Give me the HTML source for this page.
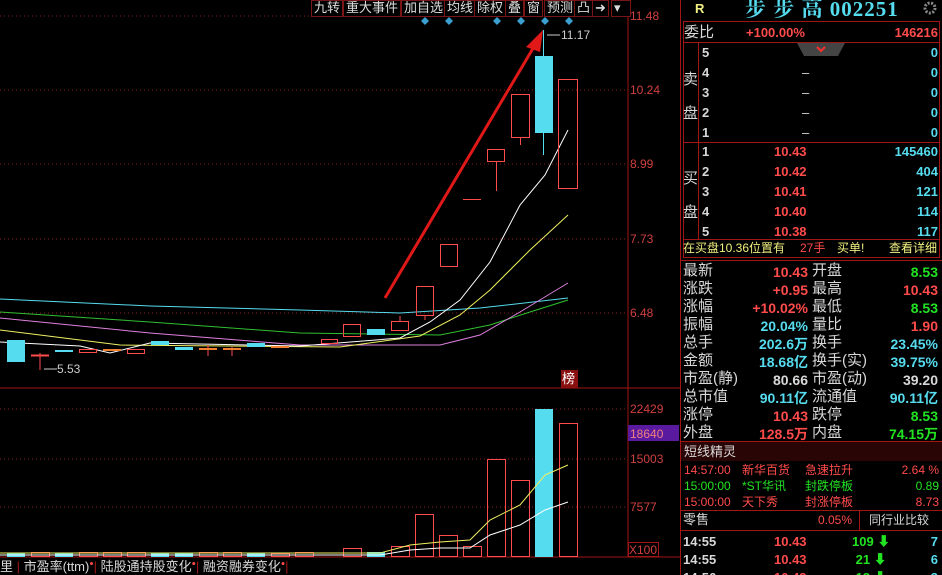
<!DOCTYPE html>
<html style="margin:0;height:575px;overflow:hidden"><head><meta charset="utf-8"><style>
body{margin:0;background:#000;width:942px;height:575px;overflow:hidden;position:relative;font-family:"Liberation Sans","Noto Sans CJK SC",sans-serif;}
.a{position:absolute;white-space:nowrap;line-height:1;}
.r{color:#ff4b4b}.c{color:#56dcef}.g{color:#22e322}.w{color:#d8d8d8}.y{color:#f0f080}
.rt{text-align:right}
.ax{color:#d04040;font-size:12px;}
.tb{position:absolute;top:0;height:15px;border:1px solid #7a1515;color:#ddd;font-size:13px;line-height:14px;padding:0 2px;background:#000}
</style></head><body>
<svg class="a" style="left:0;top:0" width="942" height="575">
<g stroke="#8a1a1a" stroke-dasharray="1,3">
<line x1="0" y1="16" x2="628" y2="16"/><line x1="0" y1="90" x2="628" y2="90"/><line x1="0" y1="164" x2="628" y2="164"/><line x1="0" y1="239" x2="628" y2="239"/><line x1="0" y1="313" x2="628" y2="313"/>
<line x1="0" y1="409" x2="628" y2="409"/><line x1="0" y1="459" x2="628" y2="459"/><line x1="0" y1="507" x2="628" y2="507"/>
</g>
<line x1="0" y1="388" x2="680" y2="388" stroke="#a01515"/>
<line x1="0" y1="557" x2="680" y2="557" stroke="#a01515"/>
<line x1="628" y1="0" x2="628" y2="557" stroke="#a01515"/>
<line x1="680.5" y1="0" x2="680.5" y2="575" stroke="#a01515"/>
<polyline fill="none" stroke="#56dcef" points="0,299 150,306 300,310 400,313 480,308 568,298"/>
<polyline fill="none" stroke="#30c030" points="0,312 150,322 300,333 440,335 490,325 530,312 568,300"/>
<polyline fill="none" stroke="#e080e0" points="0,318 150,333 300,345 440,345 480,335 520,312 568,283"/>
<polyline fill="none" stroke="#f0f060" points="0,330 120,345 340,347 420,336 460,315 490,290 530,250 568,215"/>
<polyline fill="none" stroke="#ffffff" points="0,342 80,346 110,353 150,343 300,346 400,338 430,322 460,300 490,262 520,205 545,175 568,130"/>
<g stroke="#ff4b4b" fill="none">
<rect x="558.5" y="79.5" width="19" height="109"/>
<rect x="511.5" y="94.5" width="18" height="43"/><line x1="520.5" y1="138" x2="520.5" y2="145"/>
<rect x="487.5" y="149.5" width="17" height="12"/><line x1="496.5" y1="162" x2="496.5" y2="191"/>
<line x1="463" y1="199.5" x2="481" y2="199.5"/>
<rect x="440.5" y="244.5" width="17" height="22"/>
<rect x="416.5" y="286.5" width="17" height="29"/><line x1="425" y1="316" x2="425" y2="320"/>
<rect x="391.5" y="321.5" width="17" height="9"/><line x1="400" y1="316" x2="400" y2="321"/>
<rect x="343.5" y="324.5" width="17" height="12"/>
<rect x="321.5" y="339.5" width="16" height="4"/><rect x="127.5" y="349.5" width="17" height="4"/><rect x="79.5" y="349.5" width="17" height="3"/>
<line x1="31" y1="355.5" x2="49" y2="355.5" stroke-width="2"/><line x1="40" y1="353" x2="40" y2="370"/>
<line x1="232" y1="347" x2="232" y2="356"/><line x1="208" y1="345" x2="208" y2="356"/>
</g>
<g fill="#56dcef">
<rect x="535" y="56" width="18" height="77"/><rect x="543" y="30" width="1" height="125"/>
<rect x="367" y="329" width="18" height="6"/><rect x="7" y="340" width="18" height="22"/>
<rect x="151" y="341" width="18" height="4"/><rect x="247" y="343" width="18" height="4"/><rect x="175" y="347" width="18" height="3"/><rect x="55" y="350" width="18" height="2"/>
</g>
<g fill="#f08030"><rect x="103" y="349" width="18" height="2"/><rect x="199" y="348" width="18" height="2"/><rect x="223" y="348" width="18" height="2"/><rect x="271" y="346" width="18" height="2"/></g>
<line x1="44" y1="369" x2="57" y2="369" stroke="#ccc"/><text x="57" y="373" fill="#ccc" font-size="12" font-family="Liberation Sans">5.53</text>
<line x1="547" y1="35" x2="560" y2="35" stroke="#ccc"/><text x="561" y="39" fill="#ccc" font-size="12" font-family="Liberation Sans">11.17</text>
<line x1="385" y1="298" x2="535" y2="45" stroke="#e01818" stroke-width="3"/>
<polygon points="543,30 526,47 540,52" fill="#e01818"/>
<g fill="#3aa0d0"><path d="M425,17l4,4l-4,4l-4,-4z"/><path d="M449,17l4,4l-4,4l-4,-4z"/><path d="M497,17l4,4l-4,4l-4,-4z"/><path d="M521,17l4,4l-4,4l-4,-4z"/><path d="M545,17l4,4l-4,4l-4,-4z"/><path d="M569,17l4,4l-4,4l-4,-4z"/></g>
<rect x="535" y="409" width="18" height="148" fill="#56dcef"/>
<g stroke="#ff4b4b" fill="none">
<rect x="559.5" y="423.5" width="18" height="133"/><rect x="487.5" y="459.5" width="18" height="97"/><rect x="511.5" y="480.5" width="18" height="76"/>
<rect x="463.5" y="546.5" width="18" height="10"/><rect x="439.5" y="535.5" width="18" height="21"/><rect x="415.5" y="514.5" width="18" height="42"/><rect x="391.5" y="546.5" width="18" height="10"/>
<rect x="343.5" y="548.5" width="18" height="8"/><rect x="295.5" y="552.5" width="18" height="4"/><rect x="271.5" y="553.5" width="18" height="3"/>
<rect x="31.5" y="552.5" width="18" height="4"/><rect x="79.5" y="552.5" width="18" height="4"/><rect x="103.5" y="552.5" width="18" height="4"/><rect x="127.5" y="552.5" width="18" height="4"/><rect x="199.5" y="552.5" width="18" height="4"/><rect x="223.5" y="552.5" width="18" height="4"/>
</g>
<g fill="#56dcef"><rect x="7" y="553" width="18" height="4"/><rect x="55" y="553" width="18" height="4"/><rect x="151" y="553" width="18" height="4"/><rect x="175" y="553" width="18" height="4"/><rect x="247" y="553" width="18" height="4"/><rect x="367" y="552" width="18" height="5"/></g>
<polyline fill="none" stroke="#f0f060" points="0,553 380,553 410,545 440,542 470,540 490,520 520,505 545,475 568,465"/>
<polyline fill="none" stroke="#fff" points="0,555 380,555 410,550 440,548 470,548 490,535 520,525 545,510 568,502"/>
<g stroke="#a01515" fill="none">
<rect x="683.5" y="21.5" width="256" height="236"/>
<line x1="684" y1="42.5" x2="940" y2="42.5"/><line x1="684" y1="142.5" x2="940" y2="142.5"/><line x1="684" y1="239.5" x2="940" y2="239.5"/>
<line x1="698.5" y1="43" x2="698.5" y2="239"/>
<line x1="681" y1="260.5" x2="942" y2="260.5"/><line x1="681" y1="441.5" x2="942" y2="441.5"/><line x1="681" y1="510.5" x2="942" y2="510.5"/><line x1="681" y1="530.5" x2="942" y2="530.5"/>
<line x1="859.5" y1="511" x2="859.5" y2="530"/>
</g>
<polygon points="797,43 845,43 838,56 804,56" fill="#444"/>
<path d="M817,47l4,4l4,-4" stroke="#ff3030" stroke-width="2" fill="none"/>
<rect x="681" y="442" width="261" height="19" fill="#2a0505"/>
<rect x="561" y="370" width="17" height="18" fill="#8a1010"/>
<rect x="628" y="425" width="51" height="16" fill="#5a1aa0"/>
<rect x="628.5" y="542.5" width="30" height="14" fill="none" stroke="#a01515"/>
<circle cx="930" cy="8" r="5" fill="none" stroke="#888" stroke-width="3" stroke-dasharray="2,1.5"/>
</svg>
<div class="tb" style="left:311px">九转</div><div class="tb" style="left:343px">重大事件</div><div class="tb" style="left:401px">加自选</div><div class="tb" style="left:444px">均线</div><div class="tb" style="left:474px">除权</div><div class="tb" style="left:505px">叠</div><div class="tb" style="left:524px">窗</div><div class="tb" style="left:544px">预测</div><div class="tb" style="left:574px">凸</div><div class="tb" style="left:592px">➜</div><div class="tb" style="left:611px;width:14px">▾</div>
<div class="a ax" style="left:630px;top:10px">11.48</div><div class="a ax" style="left:630px;top:84px">10.24</div><div class="a ax" style="left:630px;top:158px">8.99</div><div class="a ax" style="left:630px;top:233px">7.73</div><div class="a ax" style="left:630px;top:307px">6.48</div>
<div class="a ax" style="left:630px;top:403px">22429</div><div class="a ax" style="left:630px;top:428px;color:#f08080">18640</div><div class="a ax" style="left:630px;top:453px">15003</div><div class="a ax" style="left:630px;top:501px">7577</div><div class="a ax" style="left:629px;top:544px">X100</div>
<div class="a" style="left:562px;top:372px;color:#fff;font-size:13px">榜</div>
<div class="a w" style="left:0;top:560px;font-size:13px">里 <span style="color:#a01515">|</span> 市盈率(ttm)<sup class="r" style="font-size:7px">●</sup><span style="color:#a01515">|</span> 陆股通持股变化<sup class="r" style="font-size:7px">●</sup><span style="color:#a01515">|</span> 融资融券变化<sup class="r" style="font-size:7px">●</sup><span style="color:#a01515">|</span></div>
<div class="a y" style="left:695px;top:2px;font-size:13px;font-weight:bold">R</div>
<div class="a c" style="left:745px;top:-1px;font-size:21px;font-weight:bold;font-family:'Liberation Serif','Noto Serif CJK SC',serif;letter-spacing:1px">步 步 高 002251</div>
<div class="a w" style="left:684px;top:25px;font-size:15px">委比</div>
<div class="a r" style="left:746px;top:26px;font-size:13px;font-weight:bold">+100.00%</div>
<div class="a r rt" style="right:4px;top:26px;font-size:13px;font-weight:bold">146216</div>
<div class="a w" style="left:683px;top:63px;font-size:15px;line-height:34px">卖<br>盘</div>
<div class="a w" style="left:683px;top:162px;font-size:15px;line-height:34px">买<br>盘</div>
<div class="a w" style="left:702px;top:43px;font-size:13px;line-height:20px;font-weight:bold">5<br>4<br>3<br>2<br>1</div>
<div class="a w" style="left:802px;top:43px;font-size:13px;line-height:20px">&nbsp;<br>–<br>–<br>–<br>–</div>
<div class="a c rt" style="right:4px;top:43px;font-size:13px;line-height:20px;font-weight:bold">0<br>0<br>0<br>0<br>0</div>
<div class="a w" style="left:702px;top:142px;font-size:13px;line-height:20px;font-weight:bold">1<br>2<br>3<br>4<br>5</div>
<div class="a r" style="left:774px;top:142px;font-size:13px;line-height:20px;font-weight:bold">10.43<br>10.42<br>10.41<br>10.40<br>10.38</div>
<div class="a c rt" style="right:4px;top:142px;font-size:13px;line-height:20px;font-weight:bold">145460<br>404<br>121<br>114<br>117</div>
<div class="a y" style="left:683px;top:242px;font-size:12px">在买盘10.36位置有</div>
<div class="a r" style="left:800px;top:242px;font-size:12px">27手</div>
<div class="a y" style="left:837px;top:242px;font-size:12px">买单!</div>
<div class="a y" style="left:889px;top:242px;font-size:12px">查看详细</div>
<div class="a w" style="left:683px;top:262px;font-size:15px;line-height:18px">最新<br>涨跌<br>涨幅<br>振幅<br>总手<br>金额<br>市盈(静)<br>总市值<br>涨停<br>外盘</div>
<div class="a rt" style="right:134px;top:263px;font-size:14px;line-height:18px;font-weight:bold"><span class="r">10.43</span><br><span class="r">+0.95</span><br><span class="r">+10.02%</span><br><span class="c">20.04%</span><br><span class="c">202.6万</span><br><span class="c">18.68亿</span><br><span class="w">80.66</span><br><span class="c">90.11亿</span><br><span class="r">10.43</span><br><span class="r">128.5万</span></div>
<div class="a w" style="left:812px;top:262px;font-size:15px;line-height:18px">开盘<br>最高<br>最低<br>量比<br>换手<br>换手(实)<br>市盈(动)<br>流通值<br>跌停<br>内盘</div>
<div class="a rt" style="right:4px;top:263px;font-size:14px;line-height:18px;font-weight:bold"><span class="g">8.53</span><br><span class="r">10.43</span><br><span class="g">8.53</span><br><span class="r">1.90</span><br><span class="c">23.45%</span><br><span class="c">39.75%</span><br><span class="w">39.20</span><br><span class="c">90.11亿</span><br><span class="g">8.53</span><br><span class="g">74.15万</span></div>
<div class="a w" style="left:684px;top:445px;font-size:13px">短线精灵</div>
<div class="a" style="left:684px;top:462px;font-size:12px;line-height:16px"><span class="r">14:57:00</span><br><span class="g">15:00:00</span><br><span class="r">15:00:00</span></div>
<div class="a" style="left:742px;top:462px;font-size:12px;line-height:16px"><span class="r">新华百货</span><br><span class="g">*ST华讯</span><br><span class="r">天下秀</span></div>
<div class="a" style="left:805px;top:462px;font-size:12px;line-height:16px"><span class="r">急速拉升</span><br><span class="g">封跌停板</span><br><span class="r">封涨停板</span></div>
<div class="a rt" style="right:3px;top:462px;font-size:12px;line-height:16px"><span class="r">2.64 %</span><br><span class="g">0.89</span><br><span class="r">8.73</span></div>
<div class="a w" style="left:683px;top:513px;font-size:13px">零售</div>
<div class="a r" style="left:818px;top:514px;font-size:12px">0.05%</div>
<div class="a w" style="left:869px;top:514px;font-size:12px">同行业比较</div>
<div style="position:absolute;left:681px;top:531px;width:261px;height:44px;overflow:hidden">
<div class="a" style="left:2px;top:2px;font-size:13px;line-height:18px;font-weight:bold"><span class="w">14:55</span><br><span class="w">14:55</span><br><span class="w">14:56</span></div>
<div class="a r" style="left:93px;top:2px;font-size:13px;line-height:18px;font-weight:bold">10.43<br>10.43<br>10.43</div>
<div class="a g" style="left:171px;top:2px;font-size:13px;line-height:18px;font-weight:bold">109 ⬇<br>&nbsp;21 ⬇<br>&nbsp;13 ⬇</div>
<div class="a c rt" style="right:4px;top:2px;font-size:13px;line-height:18px;font-weight:bold">7<br>6<br>3</div>
</div>
</body></html>
